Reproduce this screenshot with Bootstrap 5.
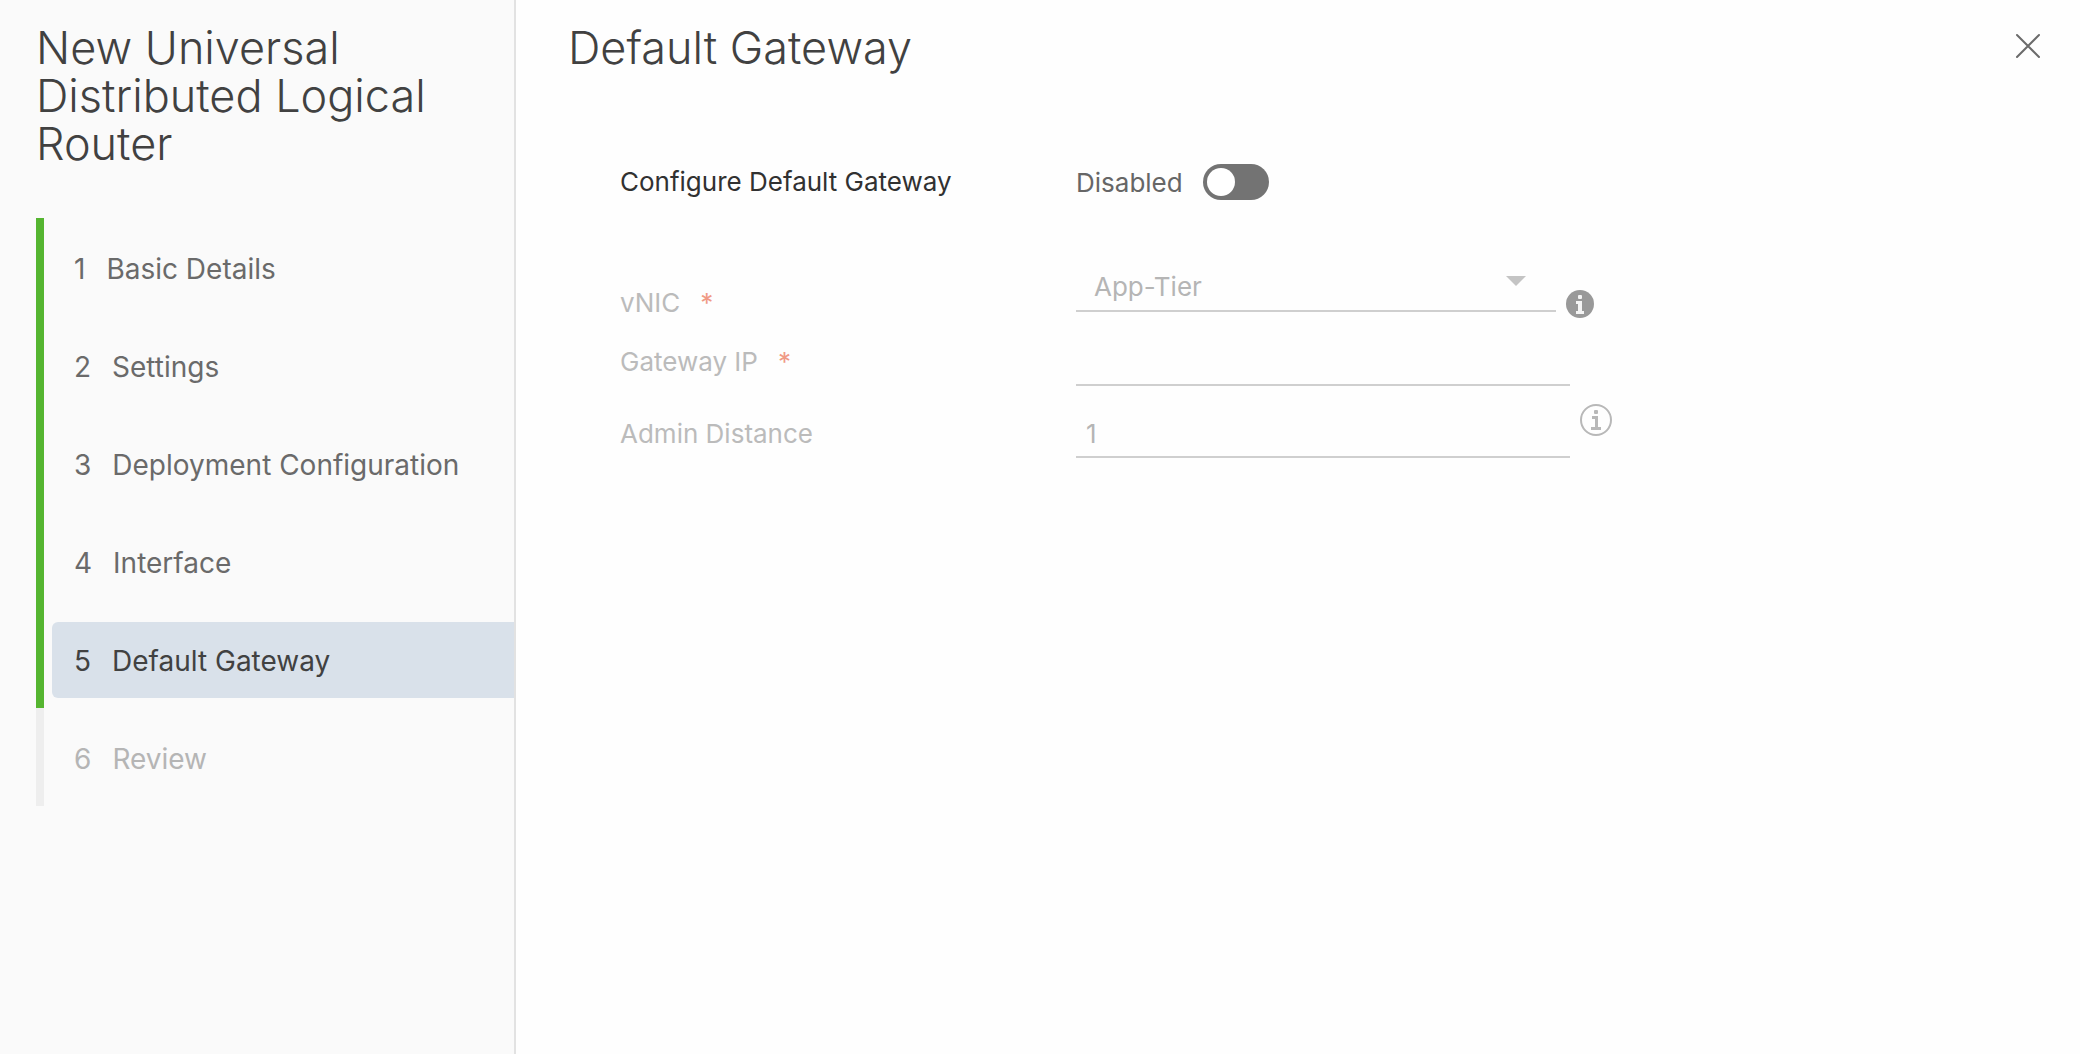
<!DOCTYPE html>
<html lang="en">
<head>
<meta charset="utf-8">
<meta name="viewport" content="width=device-width, initial-scale=1">
<title>New Universal Distributed Logical Router</title>
<link href="https://cdn.jsdelivr.net/npm/bootstrap@5.3.0/dist/css/bootstrap.min.css" rel="stylesheet">
<style>
  body { font-family: Inter, Lato, sans-serif; font-size: 26px; color: #666; background: #fefefe; }
  .wizard-side { width: 516px; padding: 24px 0 0 36px; background: #fafafa; border-right: 2px solid #e2e2e2; }
  .wizard-title { font-size: 45px; line-height: 48px; font-weight: 300; color: #414141; }
  .wizard-side .wizard-title { margin-bottom: 50px; }
  .step { height: 98px; border-left: 8px solid #55b530; padding: 2px 0 0 8px; }
  .step-link { height: 76px; padding: 2px 0 0 22px; gap: 21px; font-size: 28px; color: #6a6a6a; border-radius: 6px 0 0 6px; }
  .step-link.active { background: #d9e1ea; color: #414141; }
  .step-todo { border-left-color: #eee; }
  .step-todo .step-link { color: #b5b5b5; }
  .wizard-head { padding: 24px 36px 0 52px; }
  .close-btn { width: 32px; height: 44px; }
  .wizard-form { padding: 92px 52px 0 104px; }
  .field-label { width: 456px; line-height: 48px; }
  .label-main { color: #313131; }
  .label-low { line-height: 30px; }
  .muted { color: #bbb; }
  .required { color: #f09a86; margin-left: 20px; }
  .line-control.form-control, .line-control.form-select {
    width: 494px; height: 48px; padding: 0 10px; font-size: 26px; line-height: 46px;
    color: #b5b5b5; background: none; border: 0; border-bottom: 2px solid #cfcfcf; border-radius: 0;
  }
  .select-wrap .line-control.form-select { width: 480px; padding-left: 18px; }
  .caret { right: 30px; top: 12px; }
  .toggle.form-check-input { width: 66px; height: 36px; margin: 0 0 0 20px; background-color: #737373; border: 0; opacity: 1;
    --bs-form-switch-bg: url("data:image/svg+xml,%3csvg xmlns='http://www.w3.org/2000/svg' viewBox='0 0 36 36'%3e%3ccircle cx='18' cy='18' r='14' fill='%23fff'/%3e%3c/svg%3e"); }
  .row-toggle { height: 36px; margin-bottom: 64px; }
  .row-vnic { height: 54px; margin-bottom: 20px; }
  .row-ip { margin-bottom: 18px; }
  .row-distance { height: 54px; }
</style>
</head>
<body>
<div class="d-flex min-vh-100">
  <aside class="wizard-side flex-shrink-0">
    <h1 class="wizard-title pe-4">New Universal Distributed Logical Router</h1>
    <nav aria-label="Steps">
      <ol class="list-unstyled mb-0">
        <li class="step d-flex align-items-center"><a href="#" class="step-link d-flex align-items-center flex-fill text-decoration-none"><span>1</span><span>Basic Details</span></a></li>
        <li class="step d-flex align-items-center"><a href="#" class="step-link d-flex align-items-center flex-fill text-decoration-none"><span>2</span><span>Settings</span></a></li>
        <li class="step d-flex align-items-center"><a href="#" class="step-link d-flex align-items-center flex-fill text-decoration-none"><span>3</span><span>Deployment Configuration</span></a></li>
        <li class="step d-flex align-items-center"><a href="#" class="step-link d-flex align-items-center flex-fill text-decoration-none"><span>4</span><span>Interface</span></a></li>
        <li class="step d-flex align-items-center"><a href="#" class="step-link active d-flex align-items-center flex-fill text-decoration-none" aria-current="step"><span>5</span><span>Default Gateway</span></a></li>
        <li class="step step-todo d-flex align-items-center"><a href="#" class="step-link d-flex align-items-center flex-fill text-decoration-none"><span>6</span><span>Review</span></a></li>
      </ol>
    </nav>
  </aside>
  <main class="flex-fill">
    <header class="wizard-head d-flex justify-content-between align-items-start">
      <h2 class="wizard-title mb-0">Default Gateway</h2>
      <button type="button" class="close-btn btn p-0 border-0 d-flex align-items-center justify-content-center" aria-label="Close">
        <svg width="26" height="26" viewBox="0 0 26 26" fill="none" stroke="#6b6b6b" stroke-width="2" stroke-linecap="round"><path d="M2 2L24 24M24 2L2 24"/></svg>
      </button>
    </header>
    <form class="wizard-form">
      <div class="row-toggle d-flex align-items-center">
        <label class="field-label label-main" for="enable">Configure Default Gateway</label>
        <span>Disabled</span>
        <div class="form-switch p-0 d-flex"><input class="toggle form-check-input" type="checkbox" role="switch" id="enable"></div>
      </div>
      <div class="row-vnic d-flex align-items-end">
        <label class="field-label label-low muted" for="vnic">vNIC<span class="required">*</span></label>
        <div class="select-wrap position-relative align-self-start">
          <select class="line-control form-select" id="vnic" disabled><option>App-Tier</option></select>
          <svg class="caret position-absolute" width="20" height="10" viewBox="0 0 20 10"><path d="M0 0H20L10 10Z" fill="#c4c4c4"/></svg>
        </div>
        <svg class="ms-2" width="32" height="28" viewBox="0 0 32 28"><circle cx="16" cy="14" r="14" fill="#999"/><g fill="#f4f4f4"><rect x="14" y="5" width="4" height="4" rx="1"/><path d="M12 11H18V21H20V24H12V21H14V14H12Z"/></g></svg>
      </div>
      <div class="row-ip d-flex align-items-center">
        <label class="field-label muted" for="ip">Gateway IP<span class="required">*</span></label>
        <input class="line-control form-control" type="text" id="ip" disabled>
      </div>
      <div class="row-distance d-flex align-items-end">
        <label class="field-label muted" for="distance">Admin Distance</label>
        <input class="line-control form-control" type="text" id="distance" value="1" disabled>
        <svg class="ms-2 align-self-start" width="36" height="32" viewBox="0 0 36 32"><circle cx="18" cy="16" r="15" fill="none" stroke="#b8b8b8" stroke-width="2"/><g fill="#b8b8b8"><rect x="16" y="6" width="4" height="4" rx="1"/><path d="M14 12H20V23H23V26H13V23H17V15H14Z"/></g></svg>
      </div>
    </form>
  </main>
</div>
<script src="https://cdn.jsdelivr.net/npm/bootstrap@5.3.0/dist/js/bootstrap.bundle.min.js"></script>
</body>
</html>
